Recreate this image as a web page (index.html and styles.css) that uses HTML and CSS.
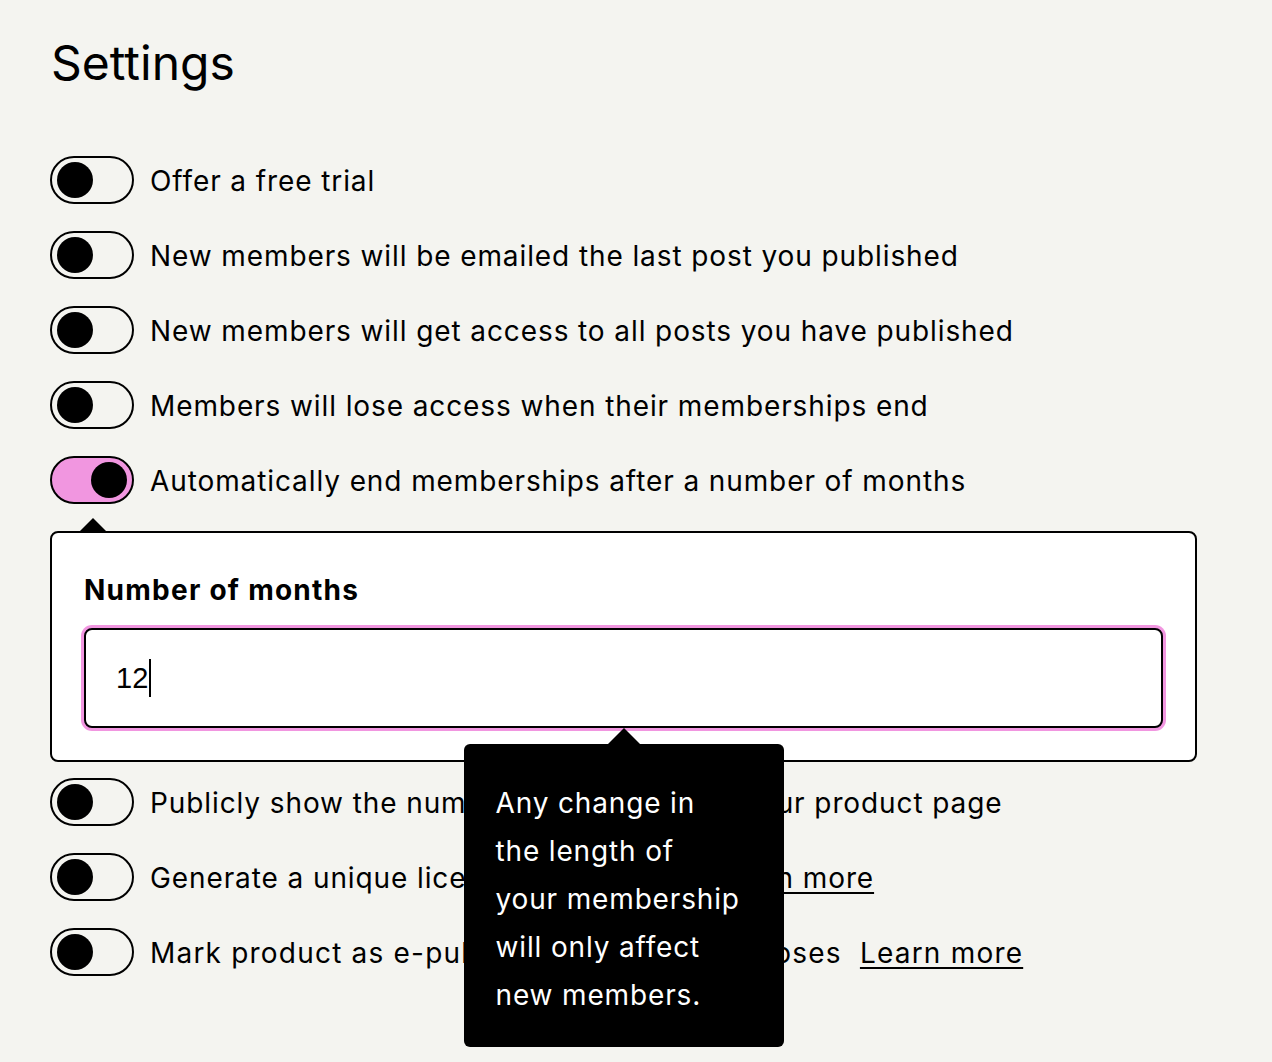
FILE: index.html
```html
<!DOCTYPE html>
<html lang="en">
<head>
<meta charset="utf-8">
<title>Settings</title>
<link rel="stylesheet" href="styles.css">
</head>
<body>
<main class="page">
  <h1 class="title">Settings</h1>
  <div class="settings">
    <div class="row">
      <span class="toggle"><span class="knob"></span></span>
      <span class="label">Offer a free trial</span>
    </div>
    <div class="row">
      <span class="toggle"><span class="knob"></span></span>
      <span class="label">New members will be emailed the last post you published</span>
    </div>
    <div class="row">
      <span class="toggle"><span class="knob"></span></span>
      <span class="label">New members will get access to all posts you have published</span>
    </div>
    <div class="row">
      <span class="toggle"><span class="knob"></span></span>
      <span class="label">Members will lose access when their memberships end</span>
    </div>
    <div class="row">
      <span class="toggle on"><span class="knob"></span></span>
      <span class="label">Automatically end memberships after a number of months</span>
    </div>
    <div class="popover">
      <div class="field-label">Number of months</div>
      <div class="input-wrap">
        <div class="input"><span class="value">12</span><span class="caret"></span></div>
        <div class="tooltip">Any change in<br>the length of<br>your membership<br>will only affect<br>new members.</div>
      </div>
    </div>
    <div class="row">
      <span class="toggle"><span class="knob"></span></span>
      <span class="label">Publicly show the number of members on your product page</span>
    </div>
    <div class="row">
      <span class="toggle"><span class="knob"></span></span>
      <span class="label">Generate a unique license key per sale <a class="link" href="#">Learn more</a></span>
    </div>
    <div class="row">
      <span class="toggle"><span class="knob"></span></span>
      <span class="label wide">Mark product as e-publication for VAT purposes <a class="link" href="#">Learn more</a></span>
    </div>
  </div>
</main>
</body>
</html>
```
FILE: styles.css
```css
html, body {
  margin: 0;
  padding: 0;
  background: #f4f4f0;
}
body {
  font-family: Inter, "Noto Sans", sans-serif;
  color: #000;
  font-size: 28px;
  min-height: 1062px;
}
.page {
  padding: 34px 75px 90px 50px;
}
.title {
  margin: 0;
  font-size: 48px;
  line-height: 58px;
  font-weight: 400;
  padding-left: 1px;
}
.settings {
  margin-top: 64px;
  display: flex;
  flex-direction: column;
  gap: 27px;
}
.row {
  display: flex;
  align-items: center;
  gap: 16px;
  height: 48px;
}
.toggle {
  box-sizing: border-box;
  flex: none;
  width: 84px;
  height: 48px;
  border: 2px solid #000;
  border-radius: 24px;
  padding: 4px 5px;
  display: flex;
  align-items: center;
  justify-content: flex-start;
}
.toggle.on {
  background: #f196e0;
  justify-content: flex-end;
}
.knob {
  width: 36px;
  height: 36px;
  border-radius: 50%;
  background: #000;
}
.label {
  line-height: 34px;
  padding-top: 2px;
  white-space: nowrap;
  letter-spacing: 0.9px;
}
.label.wide {
  letter-spacing: 1.2px;
}
.link {
  color: #000;
  text-decoration: underline;
  text-underline-offset: 4px;
  text-decoration-thickness: 2px;
  margin-left: 9px;
}
.popover {
  position: relative;
  background: #fff;
  border: 2px solid #000;
  border-radius: 8px;
  padding: 32px;
  margin-bottom: -11px;
  display: flex;
  flex-direction: column;
  gap: 13px;
}
.popover::before {
  content: "";
  position: absolute;
  top: -15px;
  left: 27px;
  border-left: 14px solid transparent;
  border-right: 14px solid transparent;
  border-bottom: 14px solid #000;
}
.field-label {
  font-weight: 700;
  line-height: 50px;
  letter-spacing: 1.25px;
}
.input-wrap {
  position: relative;
}
.input {
  box-sizing: border-box;
  height: 100px;
  border: 2px solid #000;
  border-radius: 8px;
  box-shadow: 0 0 0 3px #f196e0;
  padding: 0 30px;
  display: flex;
  align-items: center;
  font-family: "Liberation Sans", Arial, sans-serif;
  font-size: 29px;
  background: #fff;
}
.caret {
  width: 2px;
  height: 38px;
  background: #000;
  margin-left: 1px;
}
.tooltip {
  position: absolute;
  top: calc(100% + 16px);
  left: 50%;
  transform: translateX(-50%);
  width: 320px;
  box-sizing: border-box;
  background: #000;
  color: #fff;
  border-radius: 6px;
  padding: 35px 32px 28px;
  line-height: 48px;
  letter-spacing: 0.85px;
  white-space: nowrap;
  z-index: 2;
}
.tooltip::before {
  content: "";
  position: absolute;
  top: -16px;
  left: 50%;
  margin-left: -16px;
  border-left: 16px solid transparent;
  border-right: 16px solid transparent;
  border-bottom: 16px solid #000;
}
```
